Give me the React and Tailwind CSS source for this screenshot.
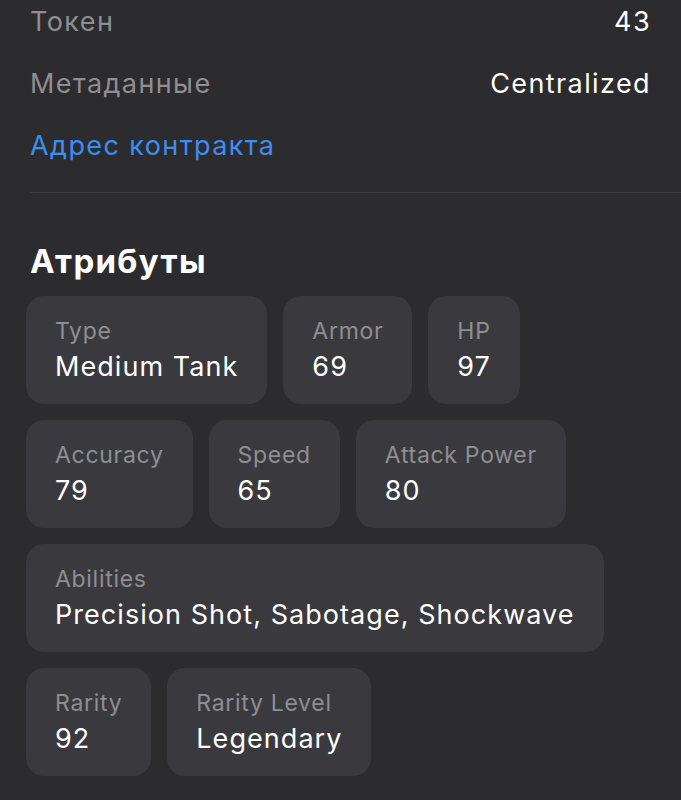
const rows = [
  { label: 'Токен', value: '43' },
  { label: 'Метаданные', value: 'Centralized' },
]

const attrRows = [
  [
    { label: 'Type', value: 'Medium Tank' },
    { label: 'Armor', value: '69' },
    { label: 'HP', value: '97' },
  ],
  [
    { label: 'Accuracy', value: '79' },
    { label: 'Speed', value: '65' },
    { label: 'Attack Power', value: '80' },
  ],
  [{ label: 'Abilities', value: 'Precision Shot, Sabotage, Shockwave' }],
  [
    { label: 'Rarity', value: '92' },
    { label: 'Rarity Level', value: 'Legendary' },
  ],
]

const Attr = ({ label, value }) => (
  <div className="bg-[#3a3a3e] rounded-[18px] px-[29px] pt-[20px] h-[108px] flex flex-col">
    <p className="text-[23px] leading-[30px] text-[#8e8e93] tracking-[0.7px]">{label}</p>
    <p className="text-[27px] leading-[42px] text-white tracking-[1.05px]">{value}</p>
  </div>
)

const App = () => {
  return (
    <div className="min-h-screen h-[800px] overflow-hidden bg-[#2c2c2e] font-['Inter',sans-serif]">
      <div className="pl-[30px] -mt-[9px]">
        {rows.map((r) => (
          <div key={r.label} className="h-[62px] flex items-center justify-between pr-[30px] text-[27px] tracking-[1.4px]">
            <span className="text-[#8e8e93]">{r.label}</span>
            <span className="text-white">{r.value}</span>
          </div>
        ))}
        <div className="h-[62px] flex items-center text-[27px] tracking-[1.4px] text-[#3d8ef2]">Адрес контракта</div>
        <div className="mt-[15px] h-px bg-[#3c3c40]" />
      </div>
      <div className="px-[26px]">
        <h2 className="pl-[4px] mt-[49px] text-[33px] leading-[38px] font-bold text-white tracking-[1.3px]">Атрибуты</h2>
        <div className="mt-[16px] flex flex-col gap-[16px]">
          {attrRows.map((row, i) => (
            <div key={i} className="flex gap-[16px]">
              {row.map((a) => (
                <Attr key={a.label} {...a} />
              ))}
            </div>
          ))}
        </div>
      </div>
    </div>
  )
}

export default App
